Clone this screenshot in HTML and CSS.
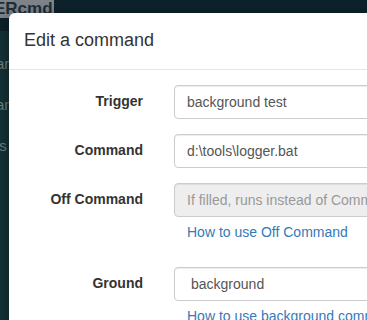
FILE: index.html
```html
<!DOCTYPE html>
<html lang="en">
<head>
    <meta charset="UTF-8">
    <meta name="viewport" content="width=device-width, initial-scale=1.0">
    <title>Edit a command</title>
    <link rel="stylesheet" href="styles.css">
</head>
<body>
    <div class="navbar">
        <span class="brand">ERcmd</span>
    </div>
    <div class="sidebar">
        <div class="side-item">ar</div>
        <div class="side-item">an</div>
        <div class="side-item">is</div>
    </div>

    <div class="modal">
        <div class="modal-header">
            <h4 class="modal-title">Edit a command</h4>
        </div>
        <div class="modal-body">
            <form class="form-horizontal">
                <div class="form-group">
                    <label class="control-label">Trigger</label>
                    <div class="field">
                        <input class="form-control" type="text" value="background test">
                    </div>
                </div>
                <div class="form-group">
                    <label class="control-label">Command</label>
                    <div class="field">
                        <input class="form-control" type="text" value="d:\tools\logger.bat">
                    </div>
                </div>
                <div class="form-group">
                    <label class="control-label">Off Command</label>
                    <div class="field">
                        <input class="form-control" type="text" placeholder="If filled, runs instead of Command when toggled off" disabled>
                        <p class="help-block"><a href="#">How to use Off Command</a></p>
                    </div>
                </div>
                <div class="form-group">
                    <label class="control-label">Ground</label>
                    <div class="field">
                        <select class="form-control">
                            <option>background</option>
                            <option>foreground</option>
                        </select>
                        <p class="help-block"><a href="#">How to use background commands</a></p>
                    </div>
                </div>
            </form>
        </div>
    </div>
</body>
</html>
```

FILE: styles.css
```css
/* General Styles */
body {
    font-family: 'Liberation Sans', Arial, sans-serif;
    font-size: 14px;
    line-height: 1.42857;
    color: #333;
    background-color: #143437;
    margin: 0;
    height: 320px;
    overflow: hidden;
}

/* Page behind the modal */
.navbar {
    height: 31px;
    background-color: #0d222b;
    overflow: hidden;
}
.brand {
    display: inline-block;
    margin-top: -5px;
    margin-left: -6px;
    padding-right: 1px;
    background-color: #7e858a;
    color: #1e2e39;
    font-size: 17px;
    font-weight: bold;
    line-height: 18px;
}
.sidebar {
    padding-top: 22px;
    overflow: hidden;
}
.side-item {
    margin-left: -4px;
    height: 41px;
    color: #6f8485;
    font-size: 15px;
}

/* Modal */
.modal {
    position: absolute;
    top: 13px;
    left: 9px;
    width: 600px;
    background-color: #fff;
    border-radius: 6px 6px 0 0;
    box-shadow: 0 5px 15px rgba(0, 0, 0, 0.5);
}
.modal-header {
    padding: 15px;
    border-bottom: 1px solid #e5e5e5;
}
.modal-title {
    margin: 0;
    font-size: 18px;
    font-weight: normal;
    line-height: 1.42857;
}
.modal-body {
    padding: 15px;
}

/* Form */
.form-group {
    display: flex;
    margin: 0 -15px 15px;
}
.control-label {
    width: 150px;
    box-sizing: border-box;
    padding: 7px 16px 0 15px;
    text-align: right;
    font-weight: bold;
}
.field {
    width: 450px;
    box-sizing: border-box;
    padding: 0 15px;
}
.form-control {
    display: block;
    width: 100%;
    height: 34px;
    box-sizing: border-box;
    padding: 6px 12px;
    font-family: inherit;
    font-size: 14px;
    line-height: 1.42857;
    color: #555;
    background-color: #fff;
    border: 1px solid #ccc;
    border-radius: 4px;
    box-shadow: inset 0 1px 1px rgba(0, 0, 0, 0.075);
    margin: 0;
}
.form-control::placeholder {
    color: #999;
}
.form-control[disabled] {
    background-color: #eee;
}
.help-block {
    margin: 6px 0 9px;
    padding-left: 13px;
    white-space: nowrap;
}
.help-block a {
    color: #337ab7;
    text-decoration: none;
}
```
